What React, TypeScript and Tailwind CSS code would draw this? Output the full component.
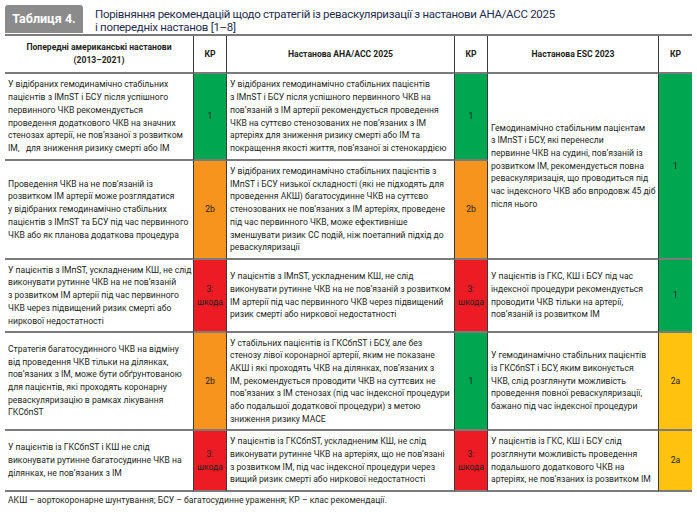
const FONT = "font-['Roboto','Open_Sans',sans-serif]";

type Kp = { label: string[]; color: string };

const GREEN: Kp = { label: ["1"], color: "bg-[#00a650]" };
const ORANGE: Kp = { label: ["2b"], color: "bg-[#f7941d]" };
const RED: Kp = { label: ["3:", "шкода"], color: "bg-[#ed1c24]" };
const YELLOW: Kp = { label: ["2a"], color: "bg-[#ffc20e]" };

function Lines({ lines }: { lines: string[] }) {
  return (
    <div>
      {lines.map((l, i) => (
        <div key={i} className="whitespace-pre">
          {l}
        </div>
      ))}
    </div>
  );
}

function TextCell({ lines, className = "" }: { lines: string[]; className?: string }) {
  return (
    <div className={`flex items-center px-[3px] border-b-2 border-[#7b7b7b] ${className}`}>
      <Lines lines={lines} />
    </div>
  );
}

function KpCell({ kp, last = false, className = "" }: { kp: Kp; last?: boolean; className?: string }) {
  return (
    <div
      className={`flex flex-col items-center justify-center border-b-2 border-b-[#7b7b7b] border-l border-l-[#3a3a3a] ${
        last ? "" : "border-r border-r-[#3a3a3a]"
      } ${kp.color} ${className}`}
    >
      {kp.label.map((l) => (
        <span key={l}>{l}</span>
      ))}
    </div>
  );
}

export default function App() {
  return (
    <div className={`w-[697px] h-[517px] bg-white ${FONT} text-[#231f20] pt-[5px] pl-[5px]`}>
      <div className="flex items-start gap-3">
        <div className="w-[78px] h-[28px] bg-[#8b8b8b] rounded-t-[3px] text-white font-bold text-[12.5px] flex items-center justify-center">
          Таблиця 4.
        </div>
        <div className="text-[11.5px] leading-[13px] tracking-[-0.3px] text-[#1f2d4d] pt-[3px]">
          <div>Порівняння рекомендацій щодо стратегій із реваскуляризації з настанови AHA/ACC 2025</div>
          <div>і попередніх настанов [1–8]</div>
        </div>
      </div>

      <div className="grid w-[687px] grid-cols-[188px_34px_227px_34px_170px_34px] grid-rows-[38px_87px_99px_73px_98px_61px] border-t-2 border-[#7b7b7b] text-[8.6px] leading-[12.7px]">
        {/* header */}
        <div className="flex flex-col items-center justify-center border-b-2 border-[#7b7b7b] font-bold">
          <span>Попередні американські настанови</span>
          <span>(2013–2021)</span>
        </div>
        <div className="flex items-center justify-center border-b-2 border-b-[#7b7b7b] border-x border-x-[#3a3a3a] font-bold">КР</div>
        <div className="flex items-center justify-center border-b-2 border-[#7b7b7b] font-bold">Настанова AHA/ACC 2025</div>
        <div className="flex items-center justify-center border-b-2 border-b-[#7b7b7b] border-x border-x-[#3a3a3a] font-bold">КР</div>
        <div className="flex items-center justify-center border-b-2 border-[#7b7b7b] font-bold">Настанова ESC 2023</div>
        <div className="flex items-center justify-center border-b-2 border-b-[#7b7b7b] border-l border-l-[#3a3a3a] font-bold">КР</div>

        {/* row 1 */}
        <TextCell
          lines={[
            "У відібраних гемодинамічно стабільних",
            "пацієнтів з ІМпST і БСУ після успішного",
            "первинного ЧКВ рекомендується",
            "проведення додаткового ЧКВ на значних",
            "стенозах артерії, не пов’язаної з розвитком",
            "ІМ,   для зниження ризику смерті або ІМ",
          ]}
        />
        <KpCell kp={GREEN} />
        <TextCell
          lines={[
            "У відібраних гемодинамічно стабільних пацієнтів",
            "з ІМпST і БСУ після успішного первинного ЧКВ на",
            "пов’язаній з ІМ артерії рекомендується проведення",
            "ЧКВ на суттєво стенозованих не пов’язаних з ІМ",
            "артеріях для зниження ризику смерті або ІМ та",
            "покращення якості життя, пов’язаної зі стенокардією",
          ]}
        />
        <KpCell kp={GREEN} />
        <TextCell
          className="row-span-2"
          lines={[
            "Гемодинамічно стабільним пацієнтам",
            "з ІМпST і БСУ, які перенесли",
            "первинне ЧКВ на судині, пов’язаній із",
            "розвитком ІМ, рекомендується повна",
            "реваскуляризація, що проводиться під",
            "час індексного ЧКВ або впродовж 45 діб",
            "після нього",
          ]}
        />
        <KpCell kp={GREEN} last className="row-span-2" />

        {/* row 2 */}
        <TextCell
          lines={[
            "Проведення ЧКВ на не пов’язаній із",
            "розвитком ІМ артерії може розглядатися",
            "у відібраних гемодинамічно стабільних",
            "пацієнтів з ІМпST та БСУ під час первинного",
            "ЧКВ або як планова додаткова процедура",
          ]}
        />
        <KpCell kp={ORANGE} />
        <TextCell
          lines={[
            "У відібраних гемодинамічно стабільних пацієнтів з",
            "ІМпST і БСУ низької складності (які не підходять для",
            "проведення АКШ) багатосудинне ЧКВ на суттєво",
            "стенозованих не пов’язаних з ІМ артеріях, проведене",
            "під час первинного ЧКВ, може ефективніше",
            "зменшувати ризик СС подій, ніж поетапний підхід до",
            "реваскуляризації",
          ]}
        />
        <KpCell kp={ORANGE} />

        {/* row 3 */}
        <TextCell
          lines={[
            "У пацієнтів з ІМпST, ускладненим КШ, не слід",
            "виконувати рутинне ЧКВ на не пов’язаній",
            "з розвитком ІМ артерії під час первинного",
            "ЧКВ через підвищений ризик смерті або",
            "ниркової недостатності",
          ]}
        />
        <KpCell kp={RED} />
        <TextCell
          lines={[
            "У пацієнтів з ІМпST, ускладненим КШ, не слід",
            "виконувати рутинне ЧКВ на не пов’язаній з розвитком",
            "ІМ артерії під час первинного ЧКВ через підвищений",
            "ризик смерті або ниркової недостатності",
          ]}
        />
        <KpCell kp={RED} />
        <TextCell
          lines={[
            "У пацієнтів із ГКС, КШ і БСУ під час",
            "індексної процедури рекомендується",
            "проводити ЧКВ тільки на артерії,",
            "пов’язаній із розвитком ІМ",
          ]}
        />
        <KpCell kp={GREEN} last />

        {/* row 4 */}
        <TextCell
          lines={[
            "Стратегія багатосудинного ЧКВ на відміну",
            "від проведення ЧКВ тільки на ділянках,",
            "пов’язаних з ІМ, може бути обґрунтованою",
            "для пацієнтів, які проходять коронарну",
            "реваскуляризацію в рамках лікування",
            "ГКСбпST",
          ]}
        />
        <KpCell kp={ORANGE} />
        <TextCell
          lines={[
            "У стабільних пацієнтів із ГКСбпST і БСУ, але без",
            "стенозу лівої коронарної артерії, яким не показане",
            "АКШ і які проходять ЧКВ на ділянках, пов’язаних з",
            "ІМ, рекомендується проводити ЧКВ на суттєвих не",
            "пов’язаних з ІМ стенозах (під час індексної процедури",
            "або подальшої додаткової процедури) з метою",
            "зниження ризику МАСЕ",
          ]}
        />
        <KpCell kp={GREEN} />
        <TextCell
          lines={[
            "У гемодинамічно стабільних пацієнтів",
            "із ГКСбпST і БСУ, яким виконується",
            "ЧКВ, слід розглянути можливість",
            "проведення повної реваскуляризації,",
            "бажано під час індексної процедури",
          ]}
        />
        <KpCell kp={YELLOW} last />

        {/* row 5 */}
        <TextCell
          lines={[
            "У пацієнтів із ГКСбпST і КШ не слід",
            "виконувати рутинне багатосудинне ЧКВ на",
            "ділянках, не пов’язаних з ІМ",
          ]}
        />
        <KpCell kp={RED} />
        <TextCell
          lines={[
            "У пацієнтів із ГКСбпST, ускладненим КШ, не слід",
            "виконувати рутинне ЧКВ на артеріях, що не пов’язані",
            "з розвитком ІМ, під час індексної процедури через",
            "вищий ризик смерті або ниркової недостатності",
          ]}
        />
        <KpCell kp={RED} />
        <TextCell
          lines={[
            "У пацієнтів із ГКС, КШ і БСУ слід",
            "розглянути можливість проведення",
            "подальшого додаткового ЧКВ на",
            "артеріях, не пов’язаних із розвитком ІМ",
          ]}
        />
        <KpCell kp={YELLOW} last />
      </div>

      <div className="text-[8.6px] pl-[3px] pt-[2px]">
        АКШ – аортокоронарне шунтування; БСУ – багатосудинне ураження; КР – клас рекомендації.
      </div>
    </div>
  );
}
